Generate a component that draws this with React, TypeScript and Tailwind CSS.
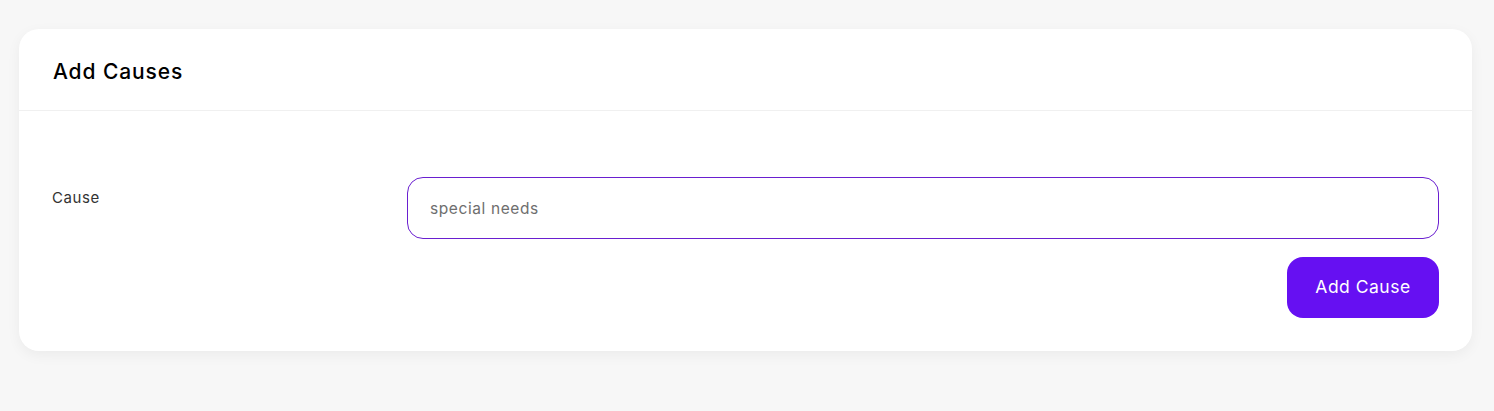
export default function App() {
  return (
    <div className="min-h-[411px] bg-[#f7f7f7] pt-[29px] pl-[19px] pr-[22px] font-['Inter',sans-serif]">
      <div className="rounded-[20px] bg-white shadow-[0_4px_14px_rgba(0,0,0,0.05)]">
        {/* header */}
        <div className="h-[82px] border-b border-[#f0f0f0] pl-[34px] pt-[5px] flex items-center">
          <h4 className="text-[21px] font-medium text-black tracking-[0.9px]">Add Causes</h4>
        </div>

        {/* body */}
        <div className="px-[33px] pt-[66px] pb-[33px]">
          <div className="grid grid-cols-[355px_1fr]">
            <label className="pt-[10px] text-[15px] text-[#333] tracking-[0.6px]">Cause</label>
            <input
              type="text"
              placeholder="special needs"
              className="h-[62px] rounded-[16px] border border-[#6a1fd0] px-[22px] text-[15.5px] tracking-[0.6px] text-[#333] placeholder:text-[#6e6e6e] outline-none"
            />
          </div>
          <div className="mt-[18px] flex justify-end">
            <button className="h-[61px] w-[152px] rounded-[16px] bg-[#6610f2] text-[17.5px] text-white tracking-[0.5px]">
              Add Cause
            </button>
          </div>
        </div>
      </div>
    </div>
  )
}
